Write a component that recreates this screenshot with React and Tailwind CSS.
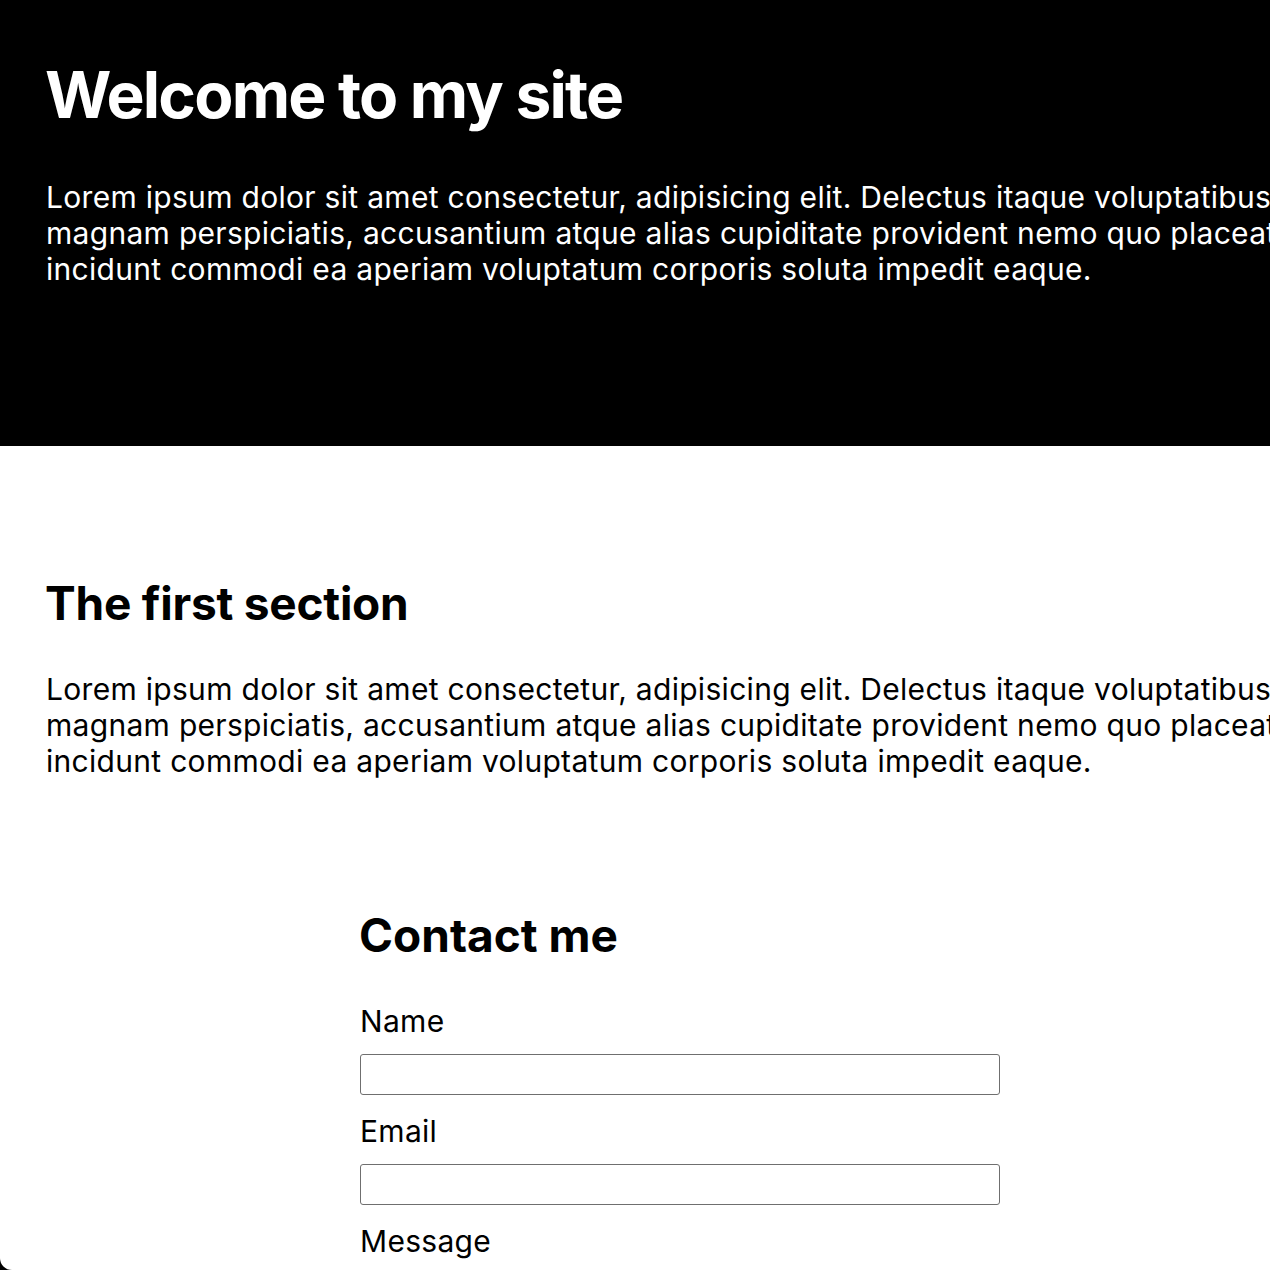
const Lorem = () => (
    <p className="text-[30px] leading-[36px] tracking-[0.01em] whitespace-nowrap">
        Lorem ipsum dolor sit amet consectetur, adipisicing elit. Delectus itaque voluptatibus quae aut,<br />
        magnam perspiciatis, accusantium atque alias cupiditate provident nemo quo placeat laborum<br />
        incidunt commodi ea aperiam voluptatum corporis soluta impedit eaque.
    </p>
);

const Field = ({ label, id }) => (
    <div>
        <label htmlFor={id} className="block text-[30px] leading-[36px] tracking-[0.01em] mb-[15px]">{label}</label>
        <input
            id={id}
            type="text"
            className="block w-[640px] h-[41px] border-[1.5px] border-[#6f6f6f] rounded-[3px] bg-white mb-[18px]"
        />
    </div>
);

export default function App() {
    return (
        <div className="relative w-[1270px] h-[1270px] overflow-hidden bg-white text-black font-['Inter','Noto_Sans',sans-serif]">
            <div className="w-[1360px]">
                <header className="bg-black text-white h-[446px] px-[46px] pt-[57px]">
                    <h1 className="-ml-[1px] text-[64px] leading-[76px] font-bold tracking-[-0.028em] mb-[46px]">Welcome to my site</h1>
                    <Lorem />
                </header>

                <section className="px-[46px] pt-[130px]">
                    <h2 className="-ml-[1px] text-[46px] leading-[54px] font-bold tracking-[-0.005em] mb-[41px]">The first section</h2>
                    <Lorem />
                </section>

                <section className="w-[640px] mx-auto pt-[129px]">
                    <h2 className="-ml-[1px] text-[46px] leading-[54px] font-bold tracking-[0em] mb-[41px]">Contact me</h2>
                    <form>
                        <Field label="Name" id="name" />
                        <Field label="Email" id="email" />
                        <label htmlFor="message" className="block text-[30px] leading-[36px] tracking-[0.01em]">Message</label>
                    </form>
                </section>
            </div>

            {/* window corner */}
            <div className="absolute bottom-0 left-0 w-[12px] h-[12px] bg-black">
                <div className="w-[24px] h-[24px] rounded-full bg-white -translate-y-[12px]" />
            </div>
        </div>
    );
}
